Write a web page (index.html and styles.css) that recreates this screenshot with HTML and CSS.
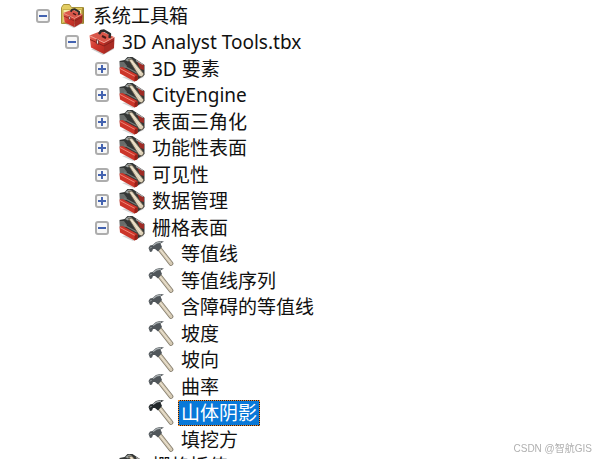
FILE: index.html
```html
<!DOCTYPE html>
<html lang="zh-CN">

<head>
    <meta charset="UTF-8">
    <meta name="viewport" content="width=device-width, initial-scale=1.0">
    <title>系统工具箱</title>
    <link rel="stylesheet" href="styles.css">
</head>

<body>

    <!-- 图标 -->
    <svg class="sprite" aria-hidden="true">
        <linearGradient id="red" x1="0" y1="0" x2="1" y2="1">
            <stop offset="0" stop-color="#e8685a"/>
            <stop offset="0.5" stop-color="#cf382d"/>
            <stop offset="1" stop-color="#b52a21"/>
        </linearGradient>
        <symbol id="box" viewBox="0 0 26 26">
            <path d="M2 20l12 6L25 20v-3z" fill="#999" opacity=".5"/>
            <path d="M0.500 6.500L12 2l13 6-10 5.500z" fill="#d9574a"/>
            <path d="M0.500 6.500l14.500 7V25L2 18.500z" fill="url(#red)"/>
            <path d="M15 13.500L25.500 8l-.5 11-10 6z" fill="#a92c24"/>
            <path d="M1 10.500l14 6.500 10-5.500" fill="none" stroke="#8a1f19" stroke-width="1"/>
            <path d="M1 7l14 6.700L25 8.300" fill="none" stroke="#f19a8c" stroke-width="1"/>
            <path d="M10 5l2-3 3-.5 6 3.500-.5 4" fill="none" stroke="#2b2b2b" stroke-width="2.400" stroke-linejoin="round"/>
            <path d="M13 7l4 2" stroke="#4a1a18" stroke-width="2"/>
            <path d="M7.500 10.500l2 1v4l-2-1z" fill="#f0e8e4" stroke="#5d1512" stroke-width=".7"/>
        </symbol>
        <symbol id="folder" viewBox="0 0 26 26">
            <path d="M1.500 4.500l2-3h6l2 3h12v16h-22z" fill="#e3cd62" stroke="#a8933a" stroke-width="1"/>
            <path d="M3 6.500h18.500v13H3z" fill="#f5eba8" stroke="#c7b04b" stroke-width="1"/>
            <path d="M23 5v15" stroke="#8f7a2c" stroke-width="1.400"/>
            <use href="#box" x="3" y="5" width="20" height="20"/>
        </symbol>
        <symbol id="toolset" viewBox="0 0 26 26">
            <path d="M3 21l11 5 11-5v-3z" fill="#aaa" opacity=".5"/>
            <path d="M.5 5l5-1 3-3 5 0 12 8v10l-9 6L1 15z" fill="#343736"/>
            <path d="M1 6l4 0 3 4-1 2-6 0z" fill="#686c6a"/>
            <path d="M6 4l4-2.500 3 1-4 3z" fill="#989d9b"/>
            <path d="M5 10l13 7" stroke="#777b78" stroke-width="1.400"/>
            <path d="M18 5l7 4v5l-4-1z" fill="#9e2b25"/>
            <path d="M17 4.500l7 4" stroke="#aaa" stroke-width="1.300"/>
            <path d="M.5 11.500l3-.5L18.500 19v5l-3 1.500L1 17.500z" fill="#cc3529"/>
            <path d="M1 12.500l15 8" stroke="#f18475" stroke-width="1"/>
            <path d="M15.500 20.500l3-1.500v5l-3 1.500z" fill="#982018"/>
            <path d="M9.500 3.500l3.500-.5L25 18l-2 3-3-1z" fill="#dccfb6" stroke="#544c40" stroke-width=".8"/>
            <path d="M12 4.500l10 13" stroke="#f4ead6" stroke-width="1"/>
        </symbol>
        <symbol id="hammer" viewBox="0 0 26 26">
            <path d="M12 8.500l11 14" stroke="#857d6d" stroke-width="4.600" stroke-linecap="round"/>
            <path d="M12 8.500l11 14" stroke="#d6cbb5" stroke-width="3" stroke-linecap="round"/>
            <path d="M12 8.500l10 12.500" stroke="#f0e7d5" stroke-width="1"/>
            <path d="M.5 7l1.500-2.500 2.500-.5L8 1l4-1 4 .5-3.500 2L14 6l-4 4.500L7 8l-2 0-1 2.500-2 0.500z" fill="currentColor"/>
            <path d="M5 4.500L9 1.800l4-.8" fill="none" stroke="#a9afb1" stroke-width="1.300"/>
            <path d="M2 7.500l1.500-1.500" stroke="#a8afb1" stroke-width="1"/>
        </symbol>
    </svg>

    <ul class="tree" role="tree">
        <li class="row" role="treeitem" aria-level="1" aria-expanded="true">
            <button class="toggle" type="button" aria-label="折叠"></button>
            <svg class="icon"><use href="#folder"/></svg>
            <span class="label">系统工具箱</span>
        </li>
        <li class="row level2" role="treeitem" aria-level="2" aria-expanded="true">
            <button class="toggle" type="button" aria-label="折叠"></button>
            <svg class="icon"><use href="#box"/></svg>
            <span class="label">3D Analyst Tools.tbx</span>
        </li>
        <li class="row level3" role="treeitem" aria-level="3" aria-expanded="false">
            <button class="toggle plus" type="button" aria-label="展开"></button>
            <svg class="icon"><use href="#toolset"/></svg>
            <span class="label">3D 要素</span>
        </li>
        <li class="row level3" role="treeitem" aria-level="3" aria-expanded="false">
            <button class="toggle plus" type="button" aria-label="展开"></button>
            <svg class="icon"><use href="#toolset"/></svg>
            <span class="label">CityEngine</span>
        </li>
        <li class="row level3" role="treeitem" aria-level="3" aria-expanded="false">
            <button class="toggle plus" type="button" aria-label="展开"></button>
            <svg class="icon"><use href="#toolset"/></svg>
            <span class="label">表面三角化</span>
        </li>
        <li class="row level3" role="treeitem" aria-level="3" aria-expanded="false">
            <button class="toggle plus" type="button" aria-label="展开"></button>
            <svg class="icon"><use href="#toolset"/></svg>
            <span class="label">功能性表面</span>
        </li>
        <li class="row level3" role="treeitem" aria-level="3" aria-expanded="false">
            <button class="toggle plus" type="button" aria-label="展开"></button>
            <svg class="icon"><use href="#toolset"/></svg>
            <span class="label">可见性</span>
        </li>
        <li class="row level3" role="treeitem" aria-level="3" aria-expanded="false">
            <button class="toggle plus" type="button" aria-label="展开"></button>
            <svg class="icon"><use href="#toolset"/></svg>
            <span class="label">数据管理</span>
        </li>
        <li class="row level3" role="treeitem" aria-level="3" aria-expanded="true">
            <button class="toggle" type="button" aria-label="折叠"></button>
            <svg class="icon"><use href="#toolset"/></svg>
            <span class="label">栅格表面</span>
        </li>
        <li class="row tool" role="treeitem" aria-level="4">
            <svg class="icon"><use href="#hammer"/></svg>
            <span class="label">等值线</span>
        </li>
        <li class="row tool" role="treeitem" aria-level="4">
            <svg class="icon"><use href="#hammer"/></svg>
            <span class="label">等值线序列</span>
        </li>
        <li class="row tool" role="treeitem" aria-level="4">
            <svg class="icon"><use href="#hammer"/></svg>
            <span class="label">含障碍的等值线</span>
        </li>
        <li class="row tool" role="treeitem" aria-level="4">
            <svg class="icon"><use href="#hammer"/></svg>
            <span class="label">坡度</span>
        </li>
        <li class="row tool" role="treeitem" aria-level="4">
            <svg class="icon"><use href="#hammer"/></svg>
            <span class="label">坡向</span>
        </li>
        <li class="row tool" role="treeitem" aria-level="4">
            <svg class="icon"><use href="#hammer"/></svg>
            <span class="label">曲率</span>
        </li>
        <li class="row tool selected" role="treeitem" aria-level="4" aria-selected="true">
            <svg class="icon"><use href="#hammer"/></svg>
            <span class="label">山体阴影</span>
        </li>
        <li class="row tool" role="treeitem" aria-level="4">
            <svg class="icon"><use href="#hammer"/></svg>
            <span class="label">填挖方</span>
        </li>
        <li class="row level3" role="treeitem" aria-level="3" aria-expanded="false">
            <button class="toggle plus" type="button" aria-label="展开"></button>
            <svg class="icon"><use href="#toolset"/></svg>
            <span class="label">栅格插值</span>
        </li>
    </ul>

    <div class="watermark">CSDN @智航GIS</div>

</body>

</html>
```
FILE: styles.css
```css
* {
    box-sizing: border-box;
}

body {
    margin: 0;
    height: 100vh;
    overflow: hidden;
    background-color: #fff;
    color: #111;
    font-family: "Noto Sans", "Noto Sans CJK SC", sans-serif;
    font-size: 19px;
    line-height: 24px;
}

.sprite {
    position: absolute;
    width: 0;
    height: 0;
}

.tree {
    display: grid;
    grid-auto-rows: 27px 26px;
    margin: 0;
    padding: 2px 0 0 36px;
    list-style: none;
}

.row {
    display: flex;
    align-items: center;
    white-space: nowrap;
}

.level2 {
    padding-left: 29px;
}

.level3 {
    padding-left: 59px;
}

.tool {
    padding-left: 112px;
}

.toggle {
    flex: none;
    width: 14px;
    height: 14px;
    margin-right: 10px;
    padding: 0;
    border: 2px solid #adadad;
    border-radius: 3px;
    background: linear-gradient(#4463b0, #4463b0) center / 8px 2px no-repeat #f7f7f7;
    cursor: pointer;
}

.toggle.plus {
    background: linear-gradient(#4463b0, #4463b0) center / 8px 2px no-repeat,
        linear-gradient(#4463b0, #4463b0) center / 2px 8px no-repeat #f7f7f7;
}

.icon {
    flex: none;
    width: 26px;
    height: 26px;
    margin-right: 4px;
    color: #50565a;
}

.label {
    padding: 0 3px;
}

.selected .icon {
    color: #22282b;
}

.selected .label {
    padding: 0 2px;
    border: 1px dotted #f08a28;
    background: linear-gradient(#0878d8, #0878d8) padding-box, #1a2030 border-box;
    color: #fff;
}

.watermark {
    position: fixed;
    right: 3px;
    bottom: 1px;
    color: #b0b0b0;
    font-family: "Liberation Sans", "Noto Sans CJK SC", sans-serif;
    font-size: 10px;
    line-height: 18px;
}
```
